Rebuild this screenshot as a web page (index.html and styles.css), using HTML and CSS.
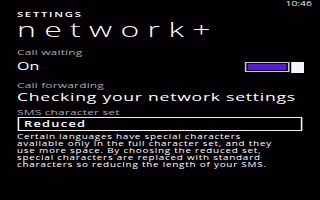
FILE: index.html
```html
<!DOCTYPE html>
<html>
<head>
<meta charset="utf-8">
<link rel="stylesheet" href="styles.css">
</head>
<body>
<div class="screen">
  <div class="status"><span class="clock">10:46</span></div>
  <div class="pivot">SETTINGS</div>
  <div class="title">network+</div>
  <div class="label label-first">Call waiting</div>
  <div class="row">
    <span class="value">On</span>
    <span class="toggle"><span class="track"><span class="fill"></span></span><span class="thumb"></span></span>
  </div>
  <div class="label label-fwd">Call forwarding</div>
  <div class="value-large">Checking your network settings</div>
  <div class="label label-sms">SMS character set</div>
  <div class="select">Reduced</div>
  <p class="desc">Certain languages have special characters<br>available only in the full character set, and they<br>use more space. By choosing the reduced set,<br>special characters are replaced with standard<br>characters so reducing the length of your SMS.</p>
</div>
</body>
</html>
```
FILE: styles.css
```css
html, body {
  margin: 0;
  padding: 0;
  background: #020003;
  overflow: hidden;
}
.screen {
  width: 200px;
  height: 200px;
  box-sizing: border-box;
  padding-left: 10.6px;
  transform: scale(1.6, 1);
  transform-origin: 0 0;
  font-family: "Open Sans", "DejaVu Sans", sans-serif;
  color: #ffffff;
}
.status {
  height: 11.3px;
  display: flex;
  justify-content: flex-end;
  padding-right: 5px;
}
.clock {
  font-size: 6.5px;
  line-height: 8px;
  color: #e8e8e8;
}
.pivot {
  font-size: 7px;
  line-height: 8px;
  letter-spacing: 1.1px;
  font-weight: 600;
}
.title {
  font-size: 20px;
  line-height: 22px;
  font-weight: 300;
  letter-spacing: 5.2px;
}
.label {
  font-size: 7.5px;
  line-height: 9px;
  color: #a8a8a8;
  letter-spacing: 0.1px;
}
.label-first { margin-top: 6.7px; }
.row {
  margin-top: 3px;
  height: 12px;
  display: flex;
  align-items: center;
  justify-content: space-between;
  padding-right: 10px;
}
.value {
  font-size: 10px;
  line-height: 12px;
}
.toggle {
  display: flex;
  align-items: center;
  gap: 1px;
  margin-top: 3px;
}
.track {
  width: 28px;
  height: 10px;
  box-sizing: border-box;
  border: 1px solid #c8c8c8;
  padding: 1px 1px;
  display: flex;
}
.fill {
  flex: 1;
  background: #5a1bd9;
}
.thumb {
  width: 8px;
  height: 11px;
  background: #f4f4f4;
}
.label-fwd { margin-top: 8.6px; }
.value-large {
  margin-top: 0.6px;
  font-size: 11px;
  line-height: 13px;
  letter-spacing: 0.46px;
}
.label-sms { margin-top: 4.4px; }
.select {
  margin-top: 0.4px;
  width: 178.8px;
  height: 14px;
  box-sizing: border-box;
  border: 1px solid #f0f0f0;
  padding-left: 3.4px;
  font-size: 8px;
  line-height: 12px;
  font-weight: 600;
  letter-spacing: 0.8px;
}
.desc {
  margin: 2px 0 0 0;
  font-size: 6.2px;
  line-height: 7px;
  letter-spacing: 0.48px;
  white-space: nowrap;
}
```
